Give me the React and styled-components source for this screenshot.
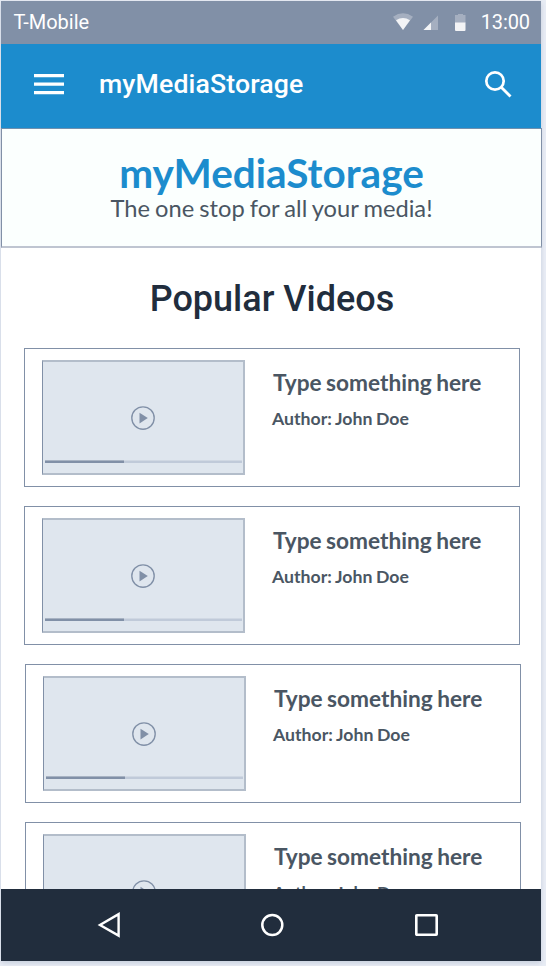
import React from "react";
import styled, { createGlobalStyle } from "styled-components";

const GlobalStyle = createGlobalStyle`
  *, *::before, *::after { box-sizing: border-box; }
  html, body { margin: 0; padding: 0; background: #e9edf5; }
  body { overflow: hidden; }
  h1, h2, h3, p { margin: 0; }
  svg { display: block; flex: none; }
  button { border: 0; padding: 0; background: none; }
`;

const Stage = styled.div`
  width: 546px;
  height: 966px;
  padding: 1px;
  overflow: hidden;
`;

const Phone = styled.div`
  display: flex;
  flex-direction: column;
  width: 540px;
  height: 960px;
  background: #fff;
  box-shadow: 0 2px 5px rgba(120, 135, 165, 0.3);
`;

const StatusBar = styled.header`
  display: flex;
  flex: none;
  align-items: center;
  height: 43px;
  padding: 0 11px 2px 12.5px;
  background: #8190a7;
  color: #fff;
  font: 400 20px/24px Roboto, sans-serif;
`;

const Carrier = styled.span`
  margin-right: auto;
`;

const Clock = styled.span`
  margin-left: 13px;
  letter-spacing: -0.1px;
`;

const AppBar = styled.nav`
  display: flex;
  flex: none;
  align-items: center;
  height: 84px;
  padding: 0 29px 4px 33px;
  background: #1c8ccd;
`;

const AppTitle = styled.h1`
  flex: 1;
  margin-left: 35px;
  color: #fff;
  font: 500 26.67px/32px Roboto, sans-serif;
  letter-spacing: 0.13px;
`;

const IconButton = styled.button`
  display: flex;
`;

const Hero = styled.section`
  flex: none;
  width: 541px;
  height: 120px;
  padding-top: 22px;
  border: 1px solid #8190a7;
  border-bottom: 2px solid #bfc5d1;
  border-top-color: #7090ae;
  background: #fbfffe;
  text-align: center;
`;

const Brand = styled.h2`
  color: #1c8ccd;
  font: 700 40.5px/44px Lato, sans-serif;
`;

const Tagline = styled.p`
  color: #4a5663;
  font: 400 23.7px/26px Lato, sans-serif;
  word-spacing: -1px;
`;

const Content = styled.main`
  flex: 1;
  min-height: 0;
  overflow: hidden;
`;

const SectionTitle = styled.h2`
  padding: 30px 0 0 2px;
  height: 100px;
  color: #212d3d;
  font: 500 36px/42px Roboto, sans-serif;
  text-align: center;
`;

const VideoList = styled.div`
  display: flex;
  flex-direction: column;
  gap: 19px;
`;

const VideoCard = styled.article`
  display: flex;
  flex: none;
  width: 496px;
  height: 139px;
  margin-left: ${({ $inset }) => $inset}px;
  padding: 11px 0 0 17px;
  border: 1px solid #8190a7;
`;

const Thumbnail = styled.div`
  display: flex;
  flex: none;
  flex-direction: column;
  align-items: flex-start;
  width: 203px;
  height: 115px;
  padding: 44px 0 0 2px;
  border: 2px solid #b3bdca;
  border-left: 1px solid #8190a7;
  background: #dfe6ee;
`;

const PlayButton = styled.button`
  display: flex;
  margin-left: 86.3px;
`;

const Track = styled.div`
  width: 197px;
  height: 3px;
  margin-top: 30px;
  background: linear-gradient(#d0d8e3 1px, #c0cad9 1px);
`;

const Progress = styled.div`
  width: 78.6px;
  height: 100%;
  background: linear-gradient(#a8b3c3 1px, #8190a7 1px);
`;

const Details = styled.div`
  margin: 9px 0 0 28px;
  color: #4a5663;
`;

const VideoTitle = styled.h3`
  font: 700 22.67px/28px Lato, sans-serif;
  word-spacing: -1px;
`;

const Author = styled.p`
  margin: 11px 0 0 -1px;
  font: 700 17.67px/22px Lato, sans-serif;
  word-spacing: -0.6px;
`;

const SystemNav = styled.footer`
  display: flex;
  flex: none;
  align-items: center;
  height: 72px;
  padding: 0 0 0 95px;
  background: #212d3d;
`;

const HomeButton = styled(IconButton)`
  margin: 0 131px 0 138px;
`;

const MenuIcon = () => (
  <svg width="30" height="22" viewBox="0 0 30 22" fill="#fff">
    <path d="M0 1h30v3.3H0zM0 9.5h30v3.3H0zM0 18h30v3.3H0z" />
  </svg>
);

const SearchIcon = () => (
  <svg width="28" height="28" viewBox="0 0 28 28" fill="none" stroke="#fff">
    <circle cx="11" cy="11" r="8.7" strokeWidth="2.7" />
    <path d="M17.5 17.5 26.5 26.5" strokeWidth="2.8" />
  </svg>
);

const StatusIcons = () => (
  <svg width="75" height="20" viewBox="0 0 75 20" fill="#f3f4f6">
    <path opacity=".32" d="M0 4.8Q10 -2.1 20 4.8L10 18z" />
    <path d="M3 8.3Q10 3.5 17 8.3L10 18z" />
    <path opacity=".32" d="M45 3.5V18H30.5z" />
    <path d="M38 10.5V18h-7.5z" />
    <path opacity=".32" d="M65 2h5v1h2.5v8H62V3h3z" />
    <path d="M62 10.5h10.5V18q0 1-1 1H63q-1 0-1-1z" />
  </svg>
);

const PlayIcon = () => (
  <svg width="24" height="24" viewBox="0 0 24 24">
    <circle cx="12" cy="12" r="11.2" fill="none" stroke="#8190a7" strokeWidth="1.35" />
    <path d="M8.5 6.8v10.7l8.3-5.4z" fill="#8190a7" />
  </svg>
);

const BackIcon = () => (
  <svg width="26" height="28" viewBox="0 0 26 28">
    <path d="M22.6 3.2V24.6L4 14z" fill="none" stroke="#fff" strokeWidth="2.4" />
  </svg>
);

const HomeIcon = () => (
  <svg width="24" height="24" viewBox="0 0 24 24">
    <circle cx="12.3" cy="12" r="10" fill="none" stroke="#fff" strokeWidth="2.5" />
  </svg>
);

const RecentsIcon = () => (
  <svg width="23" height="22" viewBox="0 0 23 22">
    <rect x="1.3" y="1.3" width="20.4" height="19.4" rx=".5" fill="none" stroke="#fff" strokeWidth="2.6" />
  </svg>
);

const videos = [
  { id: 1, inset: 23 },
  { id: 2, inset: 23 },
  { id: 3, inset: 24 },
  { id: 4, inset: 24 },
];

export default function App() {
  return (
    <>
      <GlobalStyle />
      <Stage>
        <Phone>
          <StatusBar>
            <Carrier>T-Mobile</Carrier>
            <StatusIcons />
            <Clock>13:00</Clock>
          </StatusBar>
          <AppBar>
            <IconButton aria-label="Menu"><MenuIcon /></IconButton>
            <AppTitle>myMediaStorage</AppTitle>
            <IconButton aria-label="Search"><SearchIcon /></IconButton>
          </AppBar>
          <Hero>
            <Brand>myMediaStorage</Brand>
            <Tagline>The one stop for all your media!</Tagline>
          </Hero>
          <Content>
            <SectionTitle>Popular Videos</SectionTitle>
            <VideoList>
              {videos.map(({ id, inset }) => (
                <VideoCard key={id} $inset={inset}>
                  <Thumbnail>
                    <PlayButton aria-label="Play"><PlayIcon /></PlayButton>
                    <Track><Progress /></Track>
                  </Thumbnail>
                  <Details>
                    <VideoTitle>Type something here</VideoTitle>
                    <Author>Author: John Doe</Author>
                  </Details>
                </VideoCard>
              ))}
            </VideoList>
          </Content>
          <SystemNav>
            <IconButton aria-label="Back"><BackIcon /></IconButton>
            <HomeButton aria-label="Home"><HomeIcon /></HomeButton>
            <IconButton aria-label="Recent apps"><RecentsIcon /></IconButton>
          </SystemNav>
        </Phone>
      </Stage>
    </>
  );
}
